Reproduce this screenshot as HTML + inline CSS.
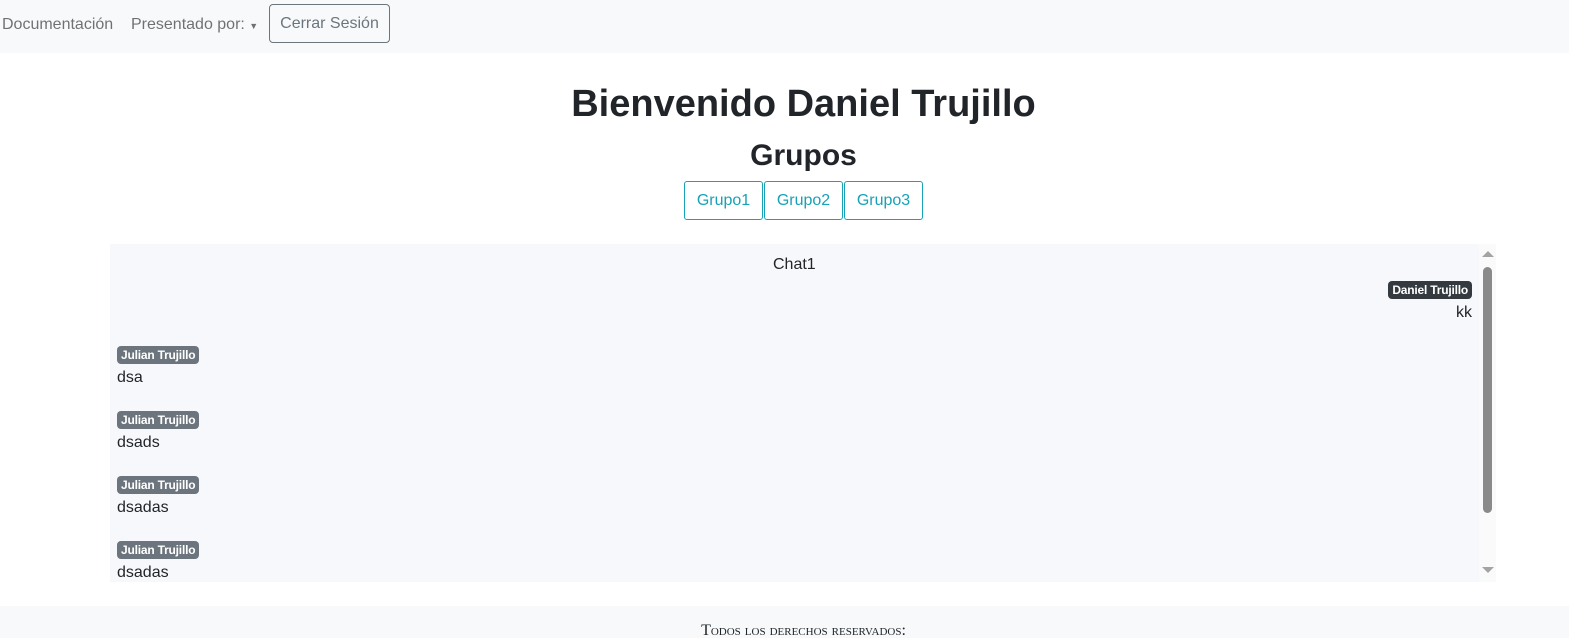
<!DOCTYPE html>
<html><head><meta charset="utf-8"><style>
body{margin:0;width:1569px;height:638px;overflow:hidden;font-family:"Liberation Sans",sans-serif;color:#212529;background:#fff;position:relative}
.nav{position:absolute;left:0;top:0;width:1569px;height:53px;background:#f8f9fa}
.nav span{position:absolute;top:16px;font-size:16px;color:rgba(0,0,0,.55)}
.btn{position:absolute;left:269px;top:4px;width:121px;height:39px;border:1px solid #6c757d;border-radius:4px;box-sizing:border-box;text-align:center;line-height:37px;font-size:16px;color:#6c757d}
h1{position:absolute;top:80px;left:0;width:1607px;text-align:center;margin:0;font-size:38px;font-weight:bold;line-height:48px}
h2{position:absolute;top:136px;left:0;width:1607px;text-align:center;margin:0;font-size:30px;font-weight:bold;line-height:40px}
.g{position:absolute;top:181px;height:39px;border:1px solid #17a2b8;border-radius:3px;box-sizing:border-box;color:#17a2b8;font-size:16px;line-height:37px;text-align:center}
.chat{position:absolute;left:110px;top:244px;width:1369px;height:338px;background:#f7f8fc}
.sb{position:absolute;left:1479px;top:244px;width:17px;height:338px;background:#fafafa}
.thumb{position:absolute;left:1483px;top:267px;width:9px;height:246px;background:#8a8a8a;border-radius:5px}
.badge{position:absolute;font-size:12px;font-weight:bold;color:#fff;border-radius:4px;padding:0 4px;height:18px;line-height:18px;letter-spacing:-0.2px}
.t{position:absolute;font-size:16px}
.foot{position:absolute;left:0;top:606px;width:1607px;height:32px;background:#f8f9fa;text-align:center;font-family:"Liberation Serif",serif;font-variant:small-caps;font-size:16px;padding-top:16px;box-sizing:border-box;white-space:nowrap}
</style></head><body>
<div class="nav"><span style="left:2px">Documentación</span><span style="left:131px">Presentado por: <span style="position:static;font-size:9px">▼</span></span><div class="btn">Cerrar Sesión</div></div>
<h1>Bienvenido Daniel Trujillo</h1>
<h2>Grupos</h2>
<div class="g" style="left:684px;width:79px">Grupo1</div>
<div class="g" style="left:764px;width:79px">Grupo2</div>
<div class="g" style="left:844px;width:79px">Grupo3</div>
<div class="chat"></div>
<div class="t" style="left:773px;top:256px">Chat1</div>
<div class="badge" style="right:97px;top:281px;background:#343a40">Daniel Trujillo</div>
<div class="t" style="right:97px;top:304px">kk</div>
<div class="badge" style="left:117px;top:346px;background:#6c757d">Julian Trujillo</div>
<div class="t" style="left:117px;top:369px">dsa</div>
<div class="badge" style="left:117px;top:411px;background:#6c757d">Julian Trujillo</div>
<div class="t" style="left:117px;top:434px">dsads</div>
<div class="badge" style="left:117px;top:476px;background:#6c757d">Julian Trujillo</div>
<div class="t" style="left:117px;top:499px">dsadas</div>
<div class="badge" style="left:117px;top:541px;background:#6c757d">Julian Trujillo</div>
<div class="t" style="left:117px;top:564px">dsadas</div>
<div class="sb"></div><div class="thumb"></div>
<div style="position:absolute;left:1482px;top:251px;border:6px solid transparent;border-bottom-color:#a3a3a3;border-top:0;width:0;height:0"></div>
<div style="position:absolute;left:1482px;top:567px;border:6px solid transparent;border-top-color:#a3a3a3;border-bottom:0;width:0;height:0"></div>
<div class="foot" style="width:1569px;padding-left:38px">Todos los derechos reservados:</div>
</body></html>
